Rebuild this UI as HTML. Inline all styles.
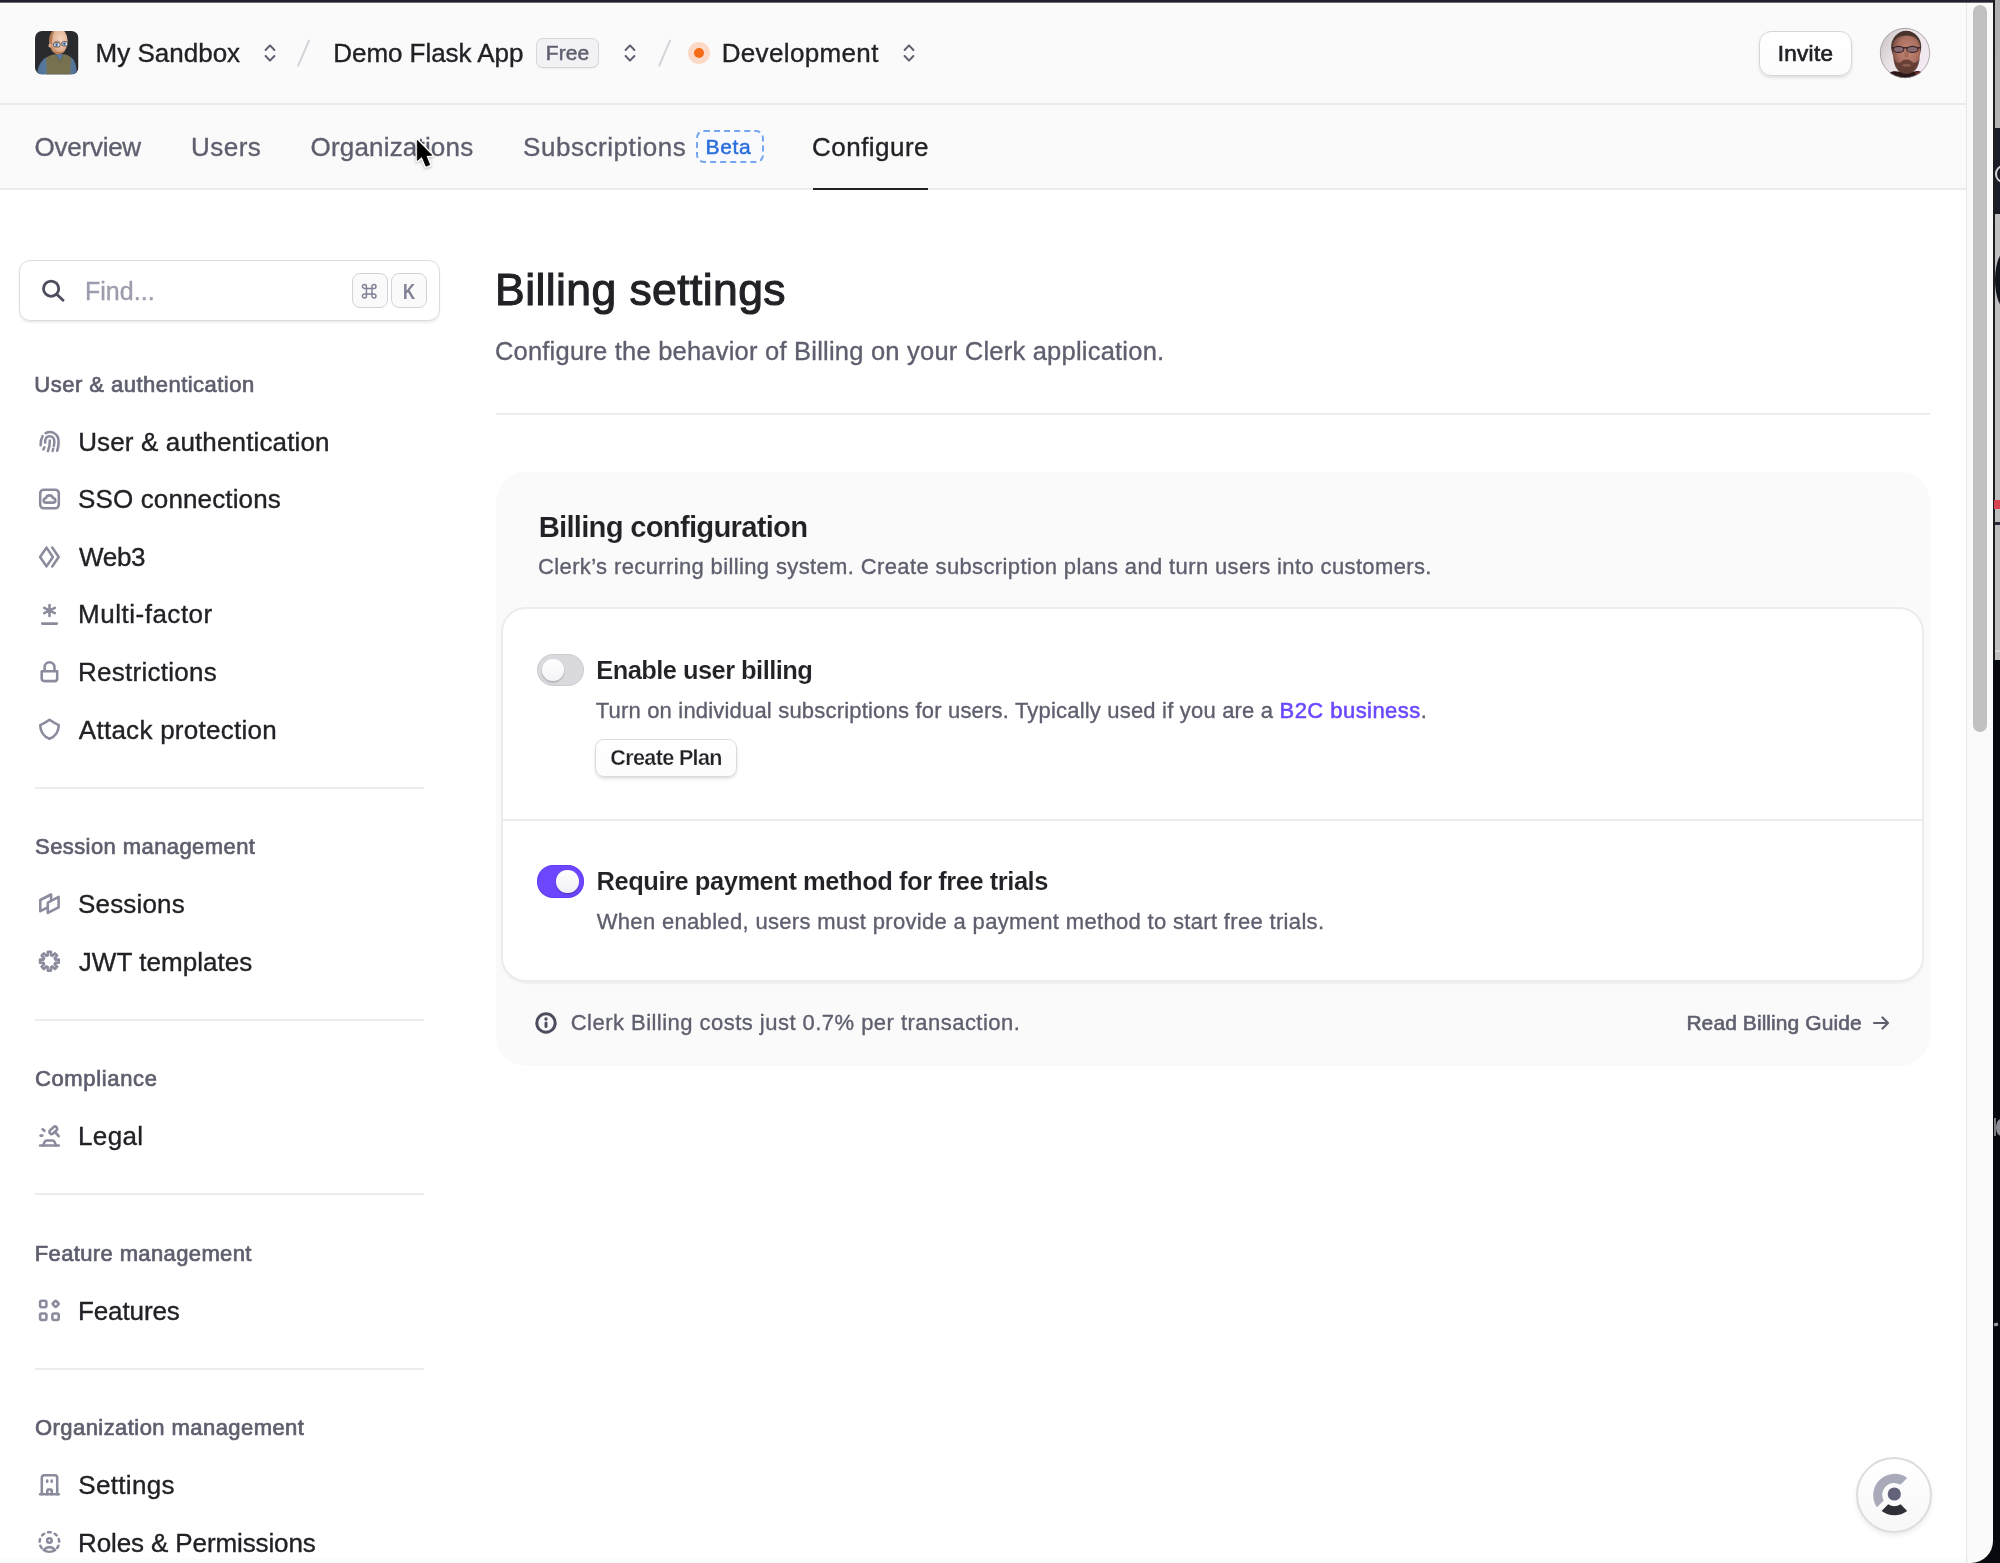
<!DOCTYPE html>
<html lang="en">
<head>
<meta charset="utf-8">
<title>Billing settings</title>
<style>
*{box-sizing:border-box;margin:0;padding:0}
html,body{width:2000px;height:1563px;overflow:hidden;background:#fff}
body{font-family:"Liberation Sans",sans-serif;color:#212126;position:relative;-webkit-font-smoothing:antialiased}
.abs{position:absolute}
.t{position:absolute;white-space:nowrap;line-height:1;transform:translateY(-50%);-webkit-text-stroke-width:0.35px}
#topbar{left:0;top:0;width:1993px;height:4px;background:linear-gradient(to bottom,#23222e 0,#23222e 2px,#6a6972 2px,#6a6972 3px,#fff 3px,#fff 4px)}
#hdr{left:0;top:3px;width:1966px;height:187px;background:#fafafa}
#hline1{left:0;top:103px;width:1966px;height:2px;background:#ebebed}
#hline2{left:0;top:188px;width:1966px;height:2px;background:#ebebed}
.hd{font-size:26px;color:#212126}
.tab{font-size:26px;color:#5e5f6e}
.nav{font-size:26px;color:#212126;left:79px}
.sec{font-size:22px;color:#5e5f6e;left:35px;-webkit-text-stroke:0.7px #5e5f6e}
.sdiv{position:absolute;left:35px;width:389px;height:2px;background:#ececee}
.nico{fill:none;stroke:#8a8b9d;stroke-width:2.55;stroke-linecap:round;stroke-linejoin:round}
.desc{font-size:22px;color:#5e5f6e}
.lbl{font-size:25.5px;color:#212126;font-weight:bold;-webkit-text-stroke:0.15px #fff}
</style>
</head>
<body>
<div id="root" style="position:absolute;left:0;top:0;width:2000px;height:1563px;will-change:transform">
<!-- window chrome -->
<div class="abs" id="hdr"></div>
<div class="abs" id="hline1"></div>
<div class="abs" id="hline2"></div>
<div class="abs" id="topbar"></div>

<!-- HEADER -->
<div id="header">
<!-- org avatar -->
<div class="abs" style="left:34px;top:30px;width:45.5px;height:45.5px;border-radius:8px;background:#fff"></div>
<svg class="abs" style="left:35px;top:31px" width="43.5" height="43.5" viewBox="0 0 43.5 43.5">
<defs><clipPath id="oc"><rect x="0" y="0" width="43.5" height="43.5" rx="7"/></clipPath>
<radialGradient id="skin" cx="0.62" cy="0.42" r="0.75"><stop offset="0" stop-color="#f3d6bf"/><stop offset="0.55" stop-color="#e2b395"/><stop offset="1" stop-color="#a9683f"/></radialGradient>
<linearGradient id="slv" x1="0" y1="0" x2="1" y2="0"><stop offset="0" stop-color="#4f6f94"/><stop offset="0.5" stop-color="#6485ab"/><stop offset="1" stop-color="#4f6f94"/></linearGradient></defs>
<g clip-path="url(#oc)">
<rect width="43.5" height="43.5" fill="#2a2b2f"/>
<path d="M2 43.5 C2.5 37 5 30 11.5 26.2 L36 26.2 C40 29 41.5 34 41.8 43.5 Z" fill="url(#slv)"/>
<path d="M11.8 43.5 L11 27 C13 25 17 23.6 19.5 23.2 L29.5 23.2 C32 23.8 35 25 36.2 27 L35.2 43.5 Z" fill="#767250"/>
<path d="M19.8 23.2 L25.2 30.6 L28.8 23.2 Z" fill="#5879a6"/>
<path d="M20.5 23.3 L25.2 31 L28.4 23.3" fill="none" stroke="#68643f" stroke-width="1"/>
<ellipse cx="23.4" cy="10.2" rx="9.3" ry="13" fill="url(#skin)"/>
<path d="M14.4 7 C14.8 3 17 0 19.5 -1 C17.5 3 16.8 8 17 14 C15.5 13 14.3 10.5 14.4 7Z" fill="#b27a52"/>
<ellipse cx="15" cy="14.6" rx="1.5" ry="2.1" fill="#dca98b"/>
<path d="M19.5 19.5 C21 23.8 28.5 24.2 30.6 18.4 C29 21 26.5 21.8 25 21.4 C23 21.8 21 21 19.5 19.5Z" fill="#b0673a"/>
<rect x="18.6" y="11.7" width="6.6" height="4.2" rx="1.5" fill="#d9e1ee" stroke="#45413c" stroke-width="0.9"/>
<rect x="26.9" y="10.7" width="5.8" height="4.2" rx="1.5" fill="#d9e1ee" stroke="#45413c" stroke-width="0.9"/>
<circle cx="21.6" cy="13.7" r="1.25" fill="#3f5f9a"/><circle cx="29.4" cy="12.7" r="1.25" fill="#3f5f9a"/>
<path d="M19.3 10.9 C20.8 9.9 23 10 24.6 10.8" stroke="#8a6a55" stroke-width="0.7" fill="none"/>
</g></svg>
<span class="t hd" style="left:95.54px;letter-spacing:0.004px;top:53px">My Sandbox</span>
<svg class="abs chev" style="left:262px;top:41px" width="16" height="24" viewBox="0 0 16 24"><path d="M3.6 9 L8 4.4 L12.4 9 M3.6 15 L8 19.6 L12.4 15" fill="none" stroke="#5e5f6e" stroke-width="2" stroke-linecap="round" stroke-linejoin="round"/></svg>
<svg class="abs" style="left:295px;top:38px" width="16" height="30" viewBox="0 0 16 30"><path d="M14 2.6 L3.2 27.6" stroke="#d2d2d9" stroke-width="1.9" stroke-linecap="round"/></svg>
<span class="t hd" style="left:333.24px;letter-spacing:-0.039px;top:53px">Demo Flask App</span>
<div class="abs" style="left:536.4px;top:37.6px;width:63px;height:30.8px;border:1.5px solid #d6d6db;border-radius:7px;background:#f2f2f4;box-shadow:0 1px 1px rgba(0,0,0,0.05)"></div>
<span class="t" style="left:545.73px;letter-spacing:0.092px;top:52.3px;font-size:21px;color:#5e5f6e;-webkit-text-stroke:0.5px #5e5f6e">Free</span>
<svg class="abs chev" style="left:622px;top:41px" width="16" height="24" viewBox="0 0 16 24"><path d="M3.6 9 L8 4.4 L12.4 9 M3.6 15 L8 19.6 L12.4 15" fill="none" stroke="#5e5f6e" stroke-width="2" stroke-linecap="round" stroke-linejoin="round"/></svg>
<svg class="abs" style="left:656px;top:38px" width="16" height="30" viewBox="0 0 16 30"><path d="M14 2.6 L3.2 27.6" stroke="#d2d2d9" stroke-width="1.9" stroke-linecap="round"/></svg>
<div class="abs" style="left:688.2px;top:42.2px;width:21.6px;height:21.6px;border-radius:50%;background:#fbd9c6"></div>
<div class="abs" style="left:693.7px;top:47.7px;width:10.6px;height:10.6px;border-radius:50%;background:#f36b16"></div>
<span class="t hd" style="left:721.64px;letter-spacing:0.358px;top:53px">Development</span>
<svg class="abs chev" style="left:901px;top:41px" width="16" height="24" viewBox="0 0 16 24"><path d="M3.6 9 L8 4.4 L12.4 9 M3.6 15 L8 19.6 L12.4 15" fill="none" stroke="#5e5f6e" stroke-width="2" stroke-linecap="round" stroke-linejoin="round"/></svg>
<div class="abs" style="left:1758.5px;top:30.5px;width:93.5px;height:45px;border:1.5px solid #d6d6da;border-radius:12px;background:linear-gradient(#fff,#fcfcfc);box-shadow:0 2px 3px rgba(0,0,0,0.10)"></div>
<span class="t" style="left:1777.77px;letter-spacing:0.280px;top:53.5px;font-size:22.5px;color:#212126;-webkit-text-stroke:0.7px #212126">Invite</span>
<!-- user avatar -->
<svg class="abs" style="left:1879px;top:27px" width="52" height="52" viewBox="0 0 52 52">
<defs><clipPath id="uc"><circle cx="26" cy="26" r="25"/></clipPath>
<linearGradient id="ubg" x1="0" y1="0.2" x2="1" y2="0.8"><stop offset="0" stop-color="#c9c3c6"/><stop offset="0.35" stop-color="#e9e2e5"/><stop offset="1" stop-color="#f5ecf6"/></linearGradient>
<radialGradient id="uf" cx="0.55" cy="0.42" r="0.62"><stop offset="0" stop-color="#c48876"/><stop offset="0.6" stop-color="#ab7061"/><stop offset="1" stop-color="#6c4238"/></radialGradient>
<filter id="ub" x="-10%" y="-10%" width="120%" height="120%"><feGaussianBlur stdDeviation="0.7"/></filter></defs>
<g clip-path="url(#uc)">
<rect width="52" height="52" fill="url(#ubg)"/>
<g filter="url(#ub)">
<path d="M7 52 C8 46 13 43.5 18 44.5 L36 44.5 C41 43 45 46 46 52 Z" fill="#2c1416"/>
<path d="M36 45 C41 43.5 45 46 46 52 L38 52 Z" fill="#6e2528"/>
<ellipse cx="27.2" cy="20" rx="15" ry="16.2" fill="#47322d"/>
<path d="M13.4 22 C13 12 20 8.6 27.5 8.6 C35 8.6 41.5 12 41.3 22 C41.5 33 38 45.5 27.5 46 C17 45.5 13.6 33 13.4 22Z" fill="url(#uf)"/>
<path d="M14.5 31 C15 41 20 47 27.5 47 C35 47 40 41 40.6 31 C38 37.5 34 36.5 31.5 33.5 C29 32.3 26 32.3 23.5 33.5 C21 36.5 17 37.5 14.5 31Z" fill="#5e3b32" opacity="0.9"/>
<ellipse cx="27.5" cy="38.2" rx="4.2" ry="1.5" fill="#8e5c4e"/>
<path d="M12.5 20.8 L41.8 20.8" stroke="#3a2626" stroke-width="1.5"/>
<ellipse cx="19.6" cy="22.4" rx="5.2" ry="3" fill="#8a6a72" stroke="#3a2626" stroke-width="1.2"/>
<ellipse cx="33.4" cy="22.4" rx="5.6" ry="3" fill="#8a6a72" stroke="#3a2626" stroke-width="1.2"/>
<path d="M26 24 C25 28 24.5 30 27.5 30.6 C30 30.4 30 28.5 29.2 24" fill="#9c6455" opacity="0.7"/>
</g>
</g>
<circle cx="26" cy="26" r="24.7" fill="none" stroke="#8f898d" stroke-width="0.9" opacity="0.75"/>
</svg>
</div>
<!-- TABS -->
<div id="tabs">
<span class="t tab" style="left:34.54px;letter-spacing:-0.248px;top:147px">Overview</span>
<span class="t tab" style="left:191.07px;letter-spacing:0.450px;top:147px">Users</span>
<span class="t tab" style="left:310.54px;letter-spacing:0.184px;top:147px">Organizations</span>
<span class="t tab" style="left:522.99px;letter-spacing:0.558px;top:147px">Subscriptions</span>
<div class="abs" style="left:696px;top:130px;width:68px;height:33px;border:2px dashed #75a6ef;border-radius:8px;background:#f8fafe"></div>
<span class="t" style="left:705.53px;letter-spacing:0.674px;top:146.2px;font-size:21px;color:#2a6fdb;-webkit-text-stroke:0.5px #2a6fdb">Beta</span>
<span class="t tab" style="left:812.05px;letter-spacing:0.474px;top:147px;color:#212126">Configure</span>
<div class="abs" style="left:813px;top:188px;width:115px;height:2px;background:#212126"></div>
<!-- mouse cursor -->
<svg class="abs" style="left:405px;top:130px;filter:drop-shadow(0 1.5px 1.5px rgba(0,0,0,0.28))" width="40" height="50" viewBox="0 0 40 50"><path d="M12.3 10.4 L12.3 30.4 L17 26.6 L21 36.2 L24.7 34.8 L21 25.5 L26.8 25.2 Z" fill="#000" stroke="#fff" stroke-width="3.4" stroke-linejoin="round"/><path d="M12.3 10.4 L12.3 30.4 L17 26.6 L21 36.2 L24.7 34.8 L21 25.5 L26.8 25.2 Z" fill="#000" stroke="#000" stroke-width="0.8" stroke-linejoin="round"/></svg>
</div>
<!-- SIDEBAR -->
<div id="sidebar">
<div class="abs" style="left:19px;top:260px;width:421px;height:61px;border:1.5px solid #dcdce0;border-radius:11px;background:#fff;box-shadow:0 2px 2px rgba(0,0,0,0.07)"></div>
<svg class="abs" style="left:38px;top:275px" width="30" height="30" viewBox="0 0 30 30"><circle cx="13.1" cy="13.7" r="7.6" fill="none" stroke="#4c4d5e" stroke-width="2.8"/><path d="M18.7 19.3 L25 25.3" stroke="#4c4d5e" stroke-width="2.8" stroke-linecap="round"/></svg>
<span class="t" style="left:84.92px;letter-spacing:0.052px;top:290.5px;font-size:25px;color:#9c9dad">Find...</span>
<div class="abs" style="left:352px;top:273px;width:36px;height:35px;border:1.5px solid #d2d2da;border-radius:8px;background:#fafafb"></div>
<div class="abs" style="left:391px;top:273px;width:36px;height:35px;border:1.5px solid #d2d2da;border-radius:8px;background:#fafafb"></div>
<svg class="abs" style="left:360.3px;top:281.7px" width="18.4" height="18.4" viewBox="0 0 20 20"><path d="M7 7 H13 V13 H7 Z M7 7 V4.8 A2.2 2.2 0 1 0 4.8 7 H7 M13 7 H15.2 A2.2 2.2 0 1 0 13 4.8 V7 M13 13 V15.2 A2.2 2.2 0 1 0 15.2 13 H13 M7 13 H4.8 A2.2 2.2 0 1 0 7 15.2 V13" fill="none" stroke="#7f8094" stroke-width="1.6" stroke-linejoin="round"/></svg>
<span class="t" style="left:402.6px;top:292.6px;font-size:21.5px;font-weight:bold;color:#7f8094;-webkit-text-stroke:0;transform-origin:0 50%;transform:translateY(-50%) scaleX(0.78)">K</span>
<span class="t sec" style="left:34.35px;letter-spacing:0.474px;top:385px">User &amp; authentication</span>
<svg class="abs nico" style="left:33px;top:425.5px" width="32" height="32" viewBox="0 0 32 32"><path d="M7.6 19.2 C7.5 15.5 8 12.8 9.6 10.2"/><path d="M12.6 7.2 C15 5.9 18 5.6 20.6 6.8 C24 8.4 25.6 11.6 25.6 15.6 C25.6 19.2 25.2 22 24.2 24.8"/><path d="M12.2 16.6 C11.6 12.6 13.8 10.2 16.6 10.2 C19.8 10.2 21.3 12.6 21.3 15.6 C21.3 17.4 21.1 18.8 20.8 20"/><path d="M20.2 22.8 L19.6 24.9"/><path d="M16.8 14.6 C17 18.2 16.4 21.8 14.9 25.2"/><path d="M11.4 21.4 L10.4 23.4"/></svg>
<span class="t nav" style="left:78.17px;letter-spacing:0.138px;top:442px">User &amp; authentication</span>
<svg class="abs nico" style="left:33px;top:483px" width="32" height="32" viewBox="0 0 32 32"><rect x="7.2" y="6.7" width="18.6" height="18.6" rx="3.6"/><path d="M12.9 19.6 H20.1 A2.2 2.2 0 0 0 20.1 15.2 A3.7 3.7 0 0 0 12.9 15.2 A2.2 2.2 0 0 0 12.9 19.6 Z"/></svg>
<span class="t nav" style="left:77.99px;letter-spacing:0.134px;top:499px">SSO connections</span>
<svg class="abs nico" style="left:33px;top:541px" width="32" height="32" viewBox="0 0 32 32"><path d="M7.1 16 L13.5 6.6 L19.9 16 L13.5 25.4 Z"/><path d="M19.2 6.6 L25.7 16 L19.2 25.4"/></svg>
<span class="t nav" style="left:79.06px;letter-spacing:-0.338px;top:557px">Web3</span>
<svg class="abs nico" style="left:33px;top:598px" width="32" height="32" viewBox="0 0 32 32"><path d="M16.5 7 V18 M11.2 9.9 L21.8 15.1 M21.8 9.9 L11.2 15.1 M9.2 25.6 H23.8"/></svg>
<span class="t nav" style="left:78.04px;letter-spacing:0.512px;top:614px">Multi-factor</span>
<svg class="abs nico" style="left:33px;top:656px" width="32" height="32" viewBox="0 0 32 32"><path d="M8.7 15.2 H24.2 V22.4 Q24.2 25.1 21.5 25.1 H11.4 Q8.7 25.1 8.7 22.4 Z"/><path d="M11.6 15 V11.2 A4.95 4.95 0 0 1 21.5 11.2 V15"/></svg>
<span class="t nav" style="left:78.04px;letter-spacing:0.264px;top:672px">Restrictions</span>
<svg class="abs nico" style="left:33px;top:713px" width="32" height="32" viewBox="0 0 32 32"><path d="M16.5 6.8 Q21 10 25.8 12.2 C25.6 18.6 22 23.6 16.5 25.7 C11 23.6 7.4 18.6 7.2 12.2 Q12 10 16.5 6.8 Z"/></svg>
<span class="t nav" style="left:78.82px;letter-spacing:0.265px;top:730px">Attack protection</span>
<div class="sdiv" style="top:787px"></div>
<span class="t sec" style="left:35.05px;letter-spacing:0.416px;top:847px">Session management</span>
<svg class="abs nico" style="left:33px;top:888px" width="32" height="32" viewBox="0 0 32 32"><path d="M18.1 12.4 V6.5 L7.3 12 V23.2 L14.8 19.4"/><path d="M14.8 14.7 L25.6 8.8 V19.4 L14.8 24.9 Z"/></svg>
<span class="t nav" style="left:77.99px;letter-spacing:0.182px;top:904px">Sessions</span>
<svg class="abs nico" style="left:33px;top:945px" width="32" height="32" viewBox="0 0 32 32"><path d="M14.80 10.30 L14.80 6.80 L18.00 6.80 L18.00 10.30 L19.44 10.90 L21.92 8.42 L24.18 10.68 L21.70 13.16 L22.30 14.60 L25.80 14.60 L25.80 17.80 L22.30 17.80 L21.70 19.24 L24.18 21.72 L21.92 23.98 L19.44 21.50 L18.00 22.10 L18.00 25.60 L14.80 25.60 L14.80 22.10 L13.36 21.50 L10.88 23.98 L8.62 21.72 L11.10 19.24 L10.50 17.80 L7.00 17.80 L7.00 14.60 L10.50 14.60 L11.10 13.16 L8.62 10.68 L10.88 8.42 L13.36 10.90 Z"/></svg>
<span class="t nav" style="left:78.77px;letter-spacing:0.052px;top:962px">JWT templates</span>
<div class="sdiv" style="top:1019px"></div>
<span class="t sec" style="left:34.93px;letter-spacing:0.648px;top:1079px">Compliance</span>
<svg class="abs nico" style="left:33px;top:1120px" width="32" height="32" viewBox="0 0 32 32"><path d="M7.1 25.4 H25.8"/><path d="M10.3 25.4 L11.6 21.9 Q12.2 20.4 13.8 20.4 H19.4 Q21 20.4 21.6 21.9 L22.9 25.4"/><rect x="-4.4" y="-2.15" width="8.8" height="4.3" rx="1.9" transform="translate(20.3 10.3) rotate(-42)"/><path d="M22.5 12.7 L25.7 16.2"/><path d="M9.6 9.2 L11.5 10.8"/><path d="M7.6 15.6 H9.3"/></svg>
<span class="t nav" style="left:78.04px;letter-spacing:0.351px;top:1136px">Legal</span>
<div class="sdiv" style="top:1193px"></div>
<span class="t sec" style="left:34.75px;letter-spacing:0.372px;top:1254px">Feature management</span>
<svg class="abs nico" style="left:33px;top:1294px" width="32" height="32" viewBox="0 0 32 32"><rect x="7.1" y="6.7" width="6.3" height="6.5" rx="1.6"/><rect x="7.1" y="19.4" width="6.3" height="6.5" rx="1.6"/><rect x="19.4" y="19.4" width="6.3" height="6.5" rx="1.6"/><rect x="-2.35" y="-2.35" width="4.7" height="4.7" rx="0.9" transform="translate(22.7 9.9) rotate(45)"/></svg>
<span class="t nav" style="left:78.04px;letter-spacing:-0.126px;top:1311px">Features</span>
<div class="sdiv" style="top:1368px"></div>
<span class="t sec" style="left:35.01px;letter-spacing:0.438px;top:1428px">Organization management</span>
<svg class="abs nico" style="left:33px;top:1469px" width="32" height="32" viewBox="0 0 32 32"><path d="M7.1 25.2 H25.8"/><path d="M8.8 25.2 V8.8 Q8.8 6.3 11.3 6.3 H21.7 Q24.2 6.3 24.2 8.8 V25.2"/><path d="M14.2 11.4 V12.8 M18.7 11.4 V12.8"/><path d="M14.3 25.2 V21.5 Q14.3 20.5 15.3 20.5 H17.8 Q18.8 20.5 18.8 21.5 V25.2"/></svg>
<span class="t nav" style="left:78.29px;letter-spacing:0.332px;top:1485px">Settings</span>
<svg class="abs nico" style="left:33px;top:1526px" width="32" height="32" viewBox="0 0 32 32"><g transform="translate(16.4 16)"><path d="M-1.3 -9.71 A9.8 9.8 0 0 1 1.3 -9.71" transform="rotate(-120)"/><path d="M-1.3 -9.71 A9.8 9.8 0 0 1 1.3 -9.71" transform="rotate(-80)"/><path d="M-1.3 -9.71 A9.8 9.8 0 0 1 1.3 -9.71" transform="rotate(-40)"/><path d="M-1.3 -9.71 A9.8 9.8 0 0 1 1.3 -9.71" transform="rotate(0)"/><path d="M-1.3 -9.71 A9.8 9.8 0 0 1 1.3 -9.71" transform="rotate(40)"/><path d="M-1.3 -9.71 A9.8 9.8 0 0 1 1.3 -9.71" transform="rotate(80)"/><path d="M-1.3 -9.71 A9.8 9.8 0 0 1 1.3 -9.71" transform="rotate(120)"/><circle cx="0" cy="-1.5" r="2.3"/><path d="M-5.8 7.9 A9.8 9.8 0 0 0 5.8 7.9 Q0 2.5 -5.8 7.9 Z"/></g></svg>
<span class="t nav" style="left:78.04px;letter-spacing:-0.118px;top:1543px">Roles &amp; Permissions</span>
</div>
<!-- MAIN -->
<div id="main">
<span class="t" style="left:495.10px;letter-spacing:0.401px;top:290.3px;font-size:44.5px;color:#212126;-webkit-text-stroke:1.1px #212126">Billing settings</span>
<span class="t" style="left:494.88px;letter-spacing:0.220px;top:352px;font-size:25.5px;color:#5e5f6e">Configure the behavior of Billing on your Clerk application.</span>
<div class="abs" style="left:496px;top:413px;width:1434px;height:2px;background:linear-gradient(#e9e9ec 0,#e9e9ec 1px,#f1f1f3 1px,#f1f1f3 2px)"></div>
<!-- card -->
<div class="abs" style="left:496px;top:472px;width:1434px;height:594px;border-radius:30px;background:#fafafa"></div>
<span class="t" style="left:538.66px;letter-spacing:-0.770px;top:526.9px;font-size:29.3px;font-weight:bold;color:#212126;-webkit-text-stroke:0.15px #fafafa">Billing configuration</span>
<span class="t desc" style="left:538.06px;letter-spacing:0.371px;top:566.5px">Clerk’s recurring billing system. Create subscription plans and turn users into customers.</span>
<div class="abs" style="left:501px;top:607px;width:1423px;height:375px;border:2px solid #ececf0;border-radius:25px;background:#fff;box-shadow:0 2px 2px rgba(0,0,0,0.04)"></div>
<!-- row 1 -->
<div class="abs" style="left:537px;top:654px;width:47px;height:32px;border-radius:16px;background:#d9d9de;box-shadow:inset 0 0 0 1px rgba(0,0,0,0.06)"></div>
<div class="abs" style="left:541.5px;top:658.6px;width:22.5px;height:22.5px;border-radius:50%;background:linear-gradient(#fff,#f3f3f6);box-shadow:0 1.5px 2px rgba(0,0,0,0.22)"></div>
<span class="t lbl" style="left:596.22px;letter-spacing:-0.564px;top:670.8px">Enable user billing</span>
<span class="t desc" style="left:595.68px;letter-spacing:0.191px;top:710.8px">Turn on individual subscriptions for users. Typically used if you are a <span style="color:#6c47ff;-webkit-text-stroke:0.55px #6c47ff;letter-spacing:0.45px">B2C business</span>.</span>
<div class="abs" style="left:595px;top:738.5px;width:142px;height:38.5px;border:1.5px solid #dadade;border-radius:9px;background:linear-gradient(#fff,#fcfcfc);box-shadow:0 2px 3px rgba(0,0,0,0.12)"></div>
<span class="t" style="left:610.29px;letter-spacing:-0.614px;top:759.2px;font-size:21.5px;font-weight:bold;color:#212126;-webkit-text-stroke:0.25px #fff">Create Plan</span>
<div class="abs" style="left:502px;top:819px;width:1421px;height:2px;background:#ececee"></div>
<!-- row 2 -->
<div class="abs" style="left:537px;top:865.3px;width:47px;height:32.4px;border-radius:16.2px;background:#6c47ff;box-shadow:inset 0 0 0 1px rgba(80,40,220,0.35)"></div>
<div class="abs" style="left:556px;top:870.2px;width:22.5px;height:22.5px;border-radius:50%;background:linear-gradient(#fff,#f0f0f4);box-shadow:0 1.5px 2px rgba(0,0,0,0.22)"></div>
<span class="t lbl" style="left:596.52px;letter-spacing:-0.463px;top:881.9px">Require payment method for free trials</span>
<span class="t desc" style="left:596.68px;letter-spacing:0.329px;top:921.8px">When enabled, users must provide a payment method to start free trials.</span>
<!-- footer -->
<svg class="abs" style="left:533px;top:1009.5px" width="26" height="26" viewBox="0 0 26 26"><circle cx="13" cy="13" r="9.2" fill="none" stroke="#4c4d5e" stroke-width="3"/><path d="M13 13 V16.6" stroke="#4c4d5e" stroke-width="3" stroke-linecap="round"/><circle cx="13" cy="9" r="1.7" fill="#4c4d5e"/></svg>
<span class="t desc" style="left:570.76px;letter-spacing:0.469px;top:1022.5px">Clerk Billing costs just 0.7% per transaction.</span>
<span class="t" style="left:1686.38px;letter-spacing:0.078px;top:1021.8px;font-size:21px;color:#5e5f6e;-webkit-text-stroke:0.6px #5e5f6e">Read Billing Guide</span>
<svg class="abs" style="left:1870px;top:1011.5px" width="22" height="22" viewBox="0 0 22 22"><path d="M4 11 H18 M12.5 5.5 L18 11 L12.5 16.5" fill="none" stroke="#5e5f6e" stroke-width="2.2" stroke-linecap="round" stroke-linejoin="round"/></svg>
</div>
<!-- CHROME -->
<div id="chrome">
<div class="abs" style="left:0;top:1558px;width:1966px;height:5px;background:#fcfcfc"></div>
<!-- floating help button -->
<div class="abs" style="left:1856px;top:1456.5px;width:76px;height:76px;border-radius:50%;background:linear-gradient(#ffffff,#f7f7f8);border:2px solid #dcdce1;box-shadow:0 3px 5px rgba(0,0,0,0.07)"></div>
<svg class="abs" style="left:1868px;top:1469px" width="50" height="50" viewBox="0 0 50 50">
<circle cx="26.3" cy="25" r="6.6" fill="#62627a"/>
<path d="M39.2 8.9 A21.4 21.4 0 0 0 8.9 38.2 L15.7 31.6 A11.9 11.9 0 0 1 32.4 15.7 Z" fill="#a9aab9"/>
<path d="M13.6 42 A21.4 21.4 0 0 0 39.2 42 L32.6 35.3 A11.9 11.9 0 0 1 20.2 35.3 Z" fill="#2f3037"/>
</svg>
<!-- scrollbar -->
<div class="abs" style="left:1966px;top:1520px;width:27px;height:43px;background:#06090d"></div>
<div class="abs" style="left:1966px;top:3px;width:27px;height:1560px;background:#fafafa;border-left:1.5px solid #e6e6e6;border-bottom-right-radius:22px"></div>
<div class="abs" style="left:1973px;top:4.5px;width:14px;height:727px;border-radius:7px;background:#c1c1c1"></div>
<!-- neighbouring window strip -->
<div class="abs" id="strip" style="left:1993px;top:0;width:7px;height:1563px;background:linear-gradient(to bottom,#b0b0b2 0,#b4b4b5 128px,#1a1c28 128px,#1a1c28 214px,#bfbfbf 214px,#bdbdbd 522px,#2a2c3a 522px,#2a2c3a 525px,#bdbdbd 525px,#bdbdbd 650px,#d4d4d4 650px,#d4d4d4 652px,#bdbdbd 652px,#bdbdbd 660px,#06090d 660px,#06090d 100%)"></div>
<div class="abs" style="left:1993px;top:0;width:1.5px;height:660px;background:#1c1c1e"></div>
<div class="abs" style="left:1995px;top:250px;width:24px;height:60px;border-radius:50%;background:#14161f"></div>
<div class="abs" style="left:1994px;top:500px;width:6px;height:9px;background:#d9434f"></div>
<div class="abs" style="left:1996px;top:1119px;width:10px;height:17px;border-radius:50%;background:#8e8e96"></div>
<div class="abs" style="left:1994px;top:1118px;width:2px;height:18px;background:#7a7a82"></div>
<div class="abs" style="left:1994px;top:1323px;width:4px;height:2.5px;background:#a0a0a8;transform:rotate(-15deg)"></div>
<div class="abs" style="left:1995px;top:165px;width:16px;height:18px;border-radius:50%;border:2px solid #d8d8dc"></div>
</div>
</div>
</body>
</html>
